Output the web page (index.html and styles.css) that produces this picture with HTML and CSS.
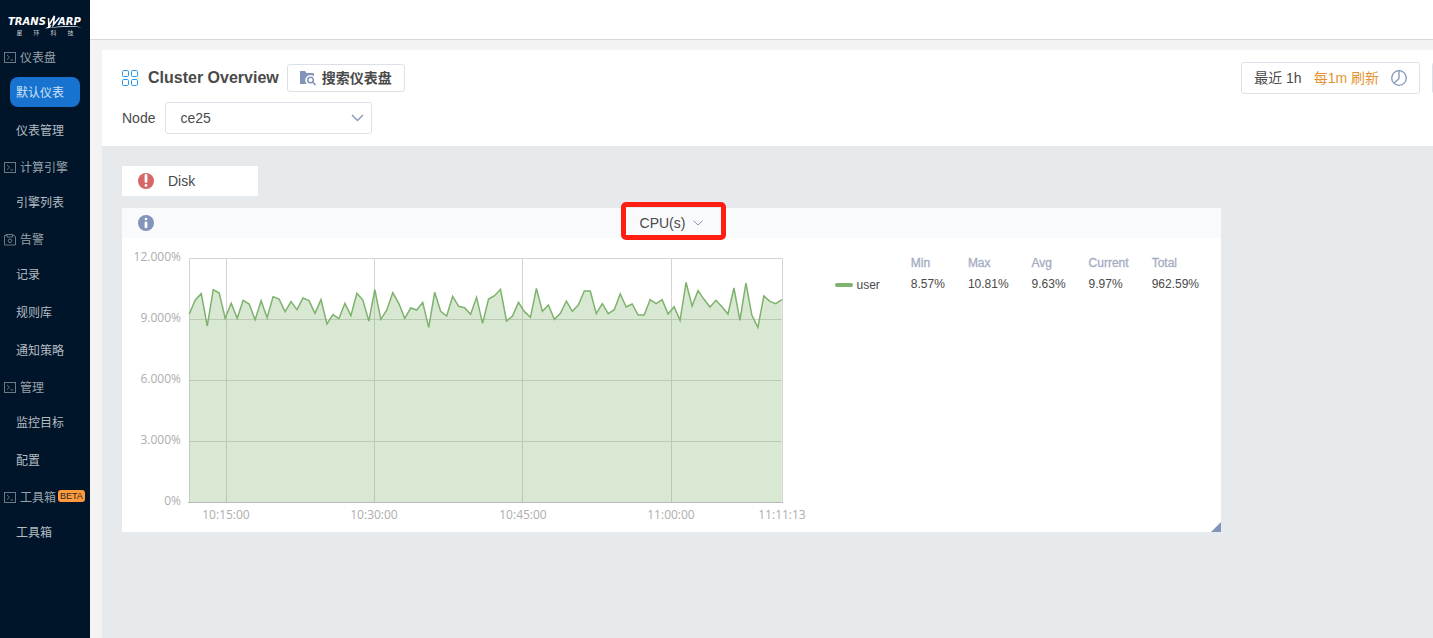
FILE: index.html
```html
<!DOCTYPE html>
<html lang="zh-CN">
<head>
<meta charset="utf-8">
<title>Cluster Overview</title>
<meta name="viewport" content="width=device-width, initial-scale=1">
<link rel="stylesheet" href="styles.css">
</head>
<body>
<svg class="defs" aria-hidden="true">
  <symbol id="terminal" viewBox="0 0 12 12">
    <rect x="0.5" y="0.5" width="11" height="10" fill="none" stroke="currentColor"/>
    <path d="M3 3l2.5 2.3L3 7.6M6.4 7.9h2.8" fill="none" stroke="currentColor" stroke-width=".9"/>
  </symbol>
</svg>
<div class="app">
  <aside class="sidebar">
    <svg class="logo" viewBox="0 0 90 43" role="img" aria-label="Transwarp">
      <text class="logo-name" x="8" y="25">TRANS</text>
      <text class="logo-name" x="58" y="25">ARP</text>
      <path d="M48.500 18l.3 7.500L54.500 16l-1.200 9L59.500 17.500" fill="none" stroke="#fff" stroke-width="1.500"/>
      <path d="M45 28.500q3-1.500 5-3.500l1.500.500q-1 1.500-2 2.200Q66 24.500 82 27.300 64 26 45 28.500z" fill="#fff"/>
      <text class="logo-sub" y="34.500" x="16.500 33.500 50.500 67.500">星环科技</text>
    </svg>
    <nav class="nav">
      <section class="group">
        <h2 class="group-title"><svg class="group-icon"><use href="#terminal"/></svg>仪表盘</h2>
        <a class="item active" href="#">默认仪表</a>
        <a class="item" href="#">仪表管理</a>
      </section>
      <section class="group">
        <h2 class="group-title"><svg class="group-icon"><use href="#terminal"/></svg>计算引擎</h2>
        <a class="item" href="#">引擎列表</a>
      </section>
      <section class="group">
        <h2 class="group-title"><svg class="group-icon" viewBox="0 0 12 12"><path d="M.5 1.500h1.500v-1h6.500l3 2v8.500H.5zM3 .8v2.200h5.500V.8" fill="none" stroke="currentColor"/><circle cx="6" cy="6.800" r="1.800" fill="none" stroke="currentColor"/></svg>告警</h2>
        <a class="item" href="#">记录</a>
        <a class="item" href="#">规则库</a>
        <a class="item" href="#">通知策略</a>
      </section>
      <section class="group">
        <h2 class="group-title"><svg class="group-icon"><use href="#terminal"/></svg>管理</h2>
        <a class="item" href="#">监控目标</a>
        <a class="item" href="#">配置</a>
      </section>
      <section class="group">
        <h2 class="group-title"><svg class="group-icon"><use href="#terminal"/></svg>工具箱<span class="beta">BETA</span></h2>
        <a class="item" href="#">工具箱</a>
      </section>
    </nav>
  </aside>
  <div class="main">
    <header class="topbar"></header>
    <main class="page">
      <div class="toolbar">
        <div class="toolbar-row">
          <svg class="grid-icon" viewBox="0 0 16 16" fill="none" stroke="#2a96ea"><rect x=".5" y=".5" width="6" height="6" rx="1.200"/><rect x="9.500" y=".5" width="6" height="6" rx="1.200"/><rect x=".5" y="9.500" width="6" height="6" rx="1.200"/><rect x="9.500" y="9.500" width="6" height="6" rx="1.200"/></svg>
          <h1 class="title">Cluster Overview</h1>
          <button class="btn search" type="button">
            <svg class="search-icon" viewBox="0 0 16 16"><path d="M0 1.500Q0 1 .5 1H5l1.500 2H13q1 0 1 1v2.500A5 5 0 0 0 6.800 14H.5Q0 14 0 13.500z" fill="#8295b9"/><circle cx="10.500" cy="10" r="2.800" fill="none" stroke="#8295b9" stroke-width="1.500"/><path d="M12.500 12l3 3" stroke="#8295b9" stroke-width="1.600"/></svg>
            搜索仪表盘
          </button>
          <div class="time-controls">
            <button class="btn time" type="button">
              <span>最近 1h</span><span class="refresh">每1m 刷新</span>
              <svg class="clock-icon" viewBox="0 0 16 16" fill="none" stroke="#8295b9" stroke-width="1.300"><circle cx="8" cy="8" r="7.300"/><path d="M8 .7v7.800L3 13.200"/></svg>
            </button>
            <button class="btn more" type="button" aria-label="More"></button>
          </div>
        </div>
        <div class="variable-row">
          <label for="node">Node</label>
          <span class="select-wrap">
            <select id="node" class="select"><option>ce25</option></select>
            <svg class="select-arrow" viewBox="0 0 12 8"><path d="M.5 1L6 6.500 11.500 1" fill="none" stroke="#8295b9" stroke-width="1.400"/></svg>
          </span>
        </div>
      </div>
      <div class="dashboard">
        <button class="disk" type="button">
          <svg class="status-icon" viewBox="0 0 16 16"><circle cx="8" cy="8" r="8" fill="#d66767"/><path d="M8 2.500v6" stroke="#fff" stroke-width="2.800" stroke-linecap="round"/><circle cx="8" cy="12.400" r="1.400" fill="#fff"/></svg>
          Disk
        </button>
        <section class="panel">
          <header class="panel-header">
            <svg class="status-icon" viewBox="0 0 16 16"><circle cx="8" cy="8" r="8" fill="#8295b9"/><circle cx="8" cy="4" r="1.300" fill="#fff"/><path d="M8 7.900v4" stroke="#fff" stroke-width="2.800" stroke-linecap="round"/></svg>
            <button class="panel-title" type="button">CPU(s)
              <svg class="title-arrow" viewBox="0 0 10 6"><path d="M.5.700L5 5 9.500.700" fill="none" stroke="#8295b9"/></svg>
            </button>
            <span></span>
            <span class="highlight"></span>
          </header>
          <div class="panel-body">
            <svg class="chart" viewBox="0 0 696 294" role="img" aria-label="CPU user usage">
              <g class="grid-lines">
                <path d="M67.500 20.500H660.500V264.500M67.500 20.500V264.500M67.500 81.500H660.500M67.500 142.500H660.500M67.500 203.500H660.500M104.500 20.500V264.500M252.500 20.500V264.500M400.500 20.500V264.500M549.500 20.500V264.500"/>
                <path class="baseline" d="M66 264.500H661"/>
              </g>
              <g transform="translate(67.300 12) scale(5.985 .33333)">
                <path class="area" d="M0 756L0 192 1 150 2 131 3 228 4 119 5 129 6 205 7 160 8 205 9 151 10 162 11 209 12 152 13 203 14 140 15 147 16 185 17 155 18 179 19 144 20 152 21 190 22 149 23 222 24 194 25 206 26 160 27 197 28 130 29 150 30 213 31 119 32 208 33 180 34 128 35 160 36 205 37 174 38 180 39 157 40 232 41 127 42 184 43 198 44 139 45 169 46 173 47 193 48 142 49 220 50 147 51 137 52 118 53 213 54 198 55 157 56 185 57 202 58 115 59 184 60 165 61 208 62 190 63 153 64 184 65 165 66 123 67 123 68 191 69 161 70 191 71 179 72 132 73 171 74 162 75 195 76 195 77 149 78 161 79 149 80 192 81 170 82 211 83 97 84 168 85 122 86 148 87 171 88 151 89 170 90 192 91 114 92 211 93 99 94 196 95 232 96 138 97 154 98 161 99 149V756z"/>
                <polyline class="line" points="0 192 1 150 2 131 3 228 4 119 5 129 6 205 7 160 8 205 9 151 10 162 11 209 12 152 13 203 14 140 15 147 16 185 17 155 18 179 19 144 20 152 21 190 22 149 23 222 24 194 25 206 26 160 27 197 28 130 29 150 30 213 31 119 32 208 33 180 34 128 35 160 36 205 37 174 38 180 39 157 40 232 41 127 42 184 43 198 44 139 45 169 46 173 47 193 48 142 49 220 50 147 51 137 52 118 53 213 54 198 55 157 56 185 57 202 58 115 59 184 60 165 61 208 62 190 63 153 64 184 65 165 66 123 67 123 68 191 69 161 70 191 71 179 72 132 73 171 74 162 75 195 76 195 77 149 78 161 79 149 80 192 81 170 82 211 83 97 84 168 85 122 86 148 87 171 88 151 89 170 90 192 91 114 92 211 93 99 94 196 95 232 96 138 97 154 98 161 99 149"/>
              </g>
              <g class="axis y-axis">
                <text x="59" y="23">12.000%</text><text x="59" y="84">9.000%</text><text x="59" y="145">6.000%</text><text x="59" y="206">3.000%</text><text x="59" y="267">0%</text>
              </g>
              <g class="axis x-axis">
                <text x="104" y="281">10:15:00</text><text x="252" y="281">10:30:00</text><text x="401" y="281">10:45:00</text><text x="549" y="281">11:00:00</text><text x="660" y="281">11:11:13</text>
              </g>
            </svg>
            <table class="legend">
              <thead><tr><td></td><th>Min</th><th>Max</th><th>Avg</th><th>Current</th><th>Total</th></tr></thead>
              <tbody><tr><td class="series"><span class="series-line"></span>user</td><td>8.57%</td><td>10.81%</td><td>9.63%</td><td>9.97%</td><td>962.59%</td></tr></tbody>
            </table>
          </div>
          <span class="resize"></span>
        </section>
      </div>
    </main>
  </div>
</div>
</body>
</html>
```
FILE: styles.css
```css
* { box-sizing: border-box; }

body {
  margin: 0;
  background: #f3f3f3;
  color: #4a4a4a;
  font: 14px/20px "Liberation Sans", "Noto Sans CJK SC", sans-serif;
}

button, select { font: inherit; color: inherit; }
svg { display: block; flex: none; }
.defs { display: none; }

.app { display: flex; min-height: 100vh; overflow: hidden; }

.sidebar { flex: none; width: 90px; background: #001529; }
.logo { width: 90px; height: 43px; }
.logo-name { fill: #fff; font: italic bold 10px "DejaVu Sans", sans-serif; }
.logo-sub { fill: #c8cdd2; font: 6px "Noto Sans CJK SC", sans-serif; }

.group-title {
  display: flex;
  align-items: center;
  height: 28px;
  margin: 0 0 6px;
  padding: 2px 0 0 4px;
  color: #98a1a9;
  font-size: 12px;
  font-weight: 400;
  white-space: nowrap;
}
.group-icon { width: 12px; height: 12px; margin-right: 4px; color: #6d7984; }
.beta {
  margin: -4px 0 0 2px;
  padding: 0 2px;
  border-radius: 3px;
  background: #ff9a3c;
  color: #2b2b2b;
  font-size: 9px;
  line-height: 12px;
}
.item {
  display: flex;
  align-items: center;
  height: 30px;
  margin: 0 10px 8px;
  padding: 2px 0 0 6px;
  border-radius: 8px;
  color: #b4bbc1;
  font-size: 12px;
  text-decoration: none;
  white-space: nowrap;
}
.item.active { background: #1872d0; color: #cfe2f6; }

.main { display: flex; flex-direction: column; flex: 1; min-width: 0; }
.topbar { height: 40px; background: #fff; border-bottom: 1px solid #d9d9d9; }
.page { display: flex; flex-direction: column; flex: 1; margin: 10px 0 0 12px; }

.toolbar { padding: 12px 0 12px 20px; background: #fff; }
.toolbar-row { display: flex; align-items: center; height: 32px; }
.grid-icon { width: 16px; height: 16px; margin-right: 10px; }
.title { margin: 0 8px 0 0; font-size: 16px; line-height: 20px; }
.btn {
  display: flex;
  align-items: center;
  border: 1px solid #dce1e9;
  border-radius: 3px;
  background: #fff;
  white-space: nowrap;
}
.search { gap: 6px; height: 28px; padding: 0 12px; font-weight: 700; }
.search-icon, .clock-icon { width: 16px; height: 16px; }
.time-controls { display: flex; gap: 12px; margin-left: auto; margin-right: -31px; }
.time { gap: 12px; height: 32px; padding: 0 12px; }
.refresh { color: #e59435; }
.more { width: 32px; height: 32px; }

.variable-row { display: flex; align-items: center; gap: 10px; margin-top: 8px; }
.select-wrap { position: relative; width: 207px; }
.select {
  display: block;
  width: 100%;
  height: 32px;
  padding: 0 14px;
  border: 1px solid #dce1e9;
  border-radius: 3px;
  background: #fff;
  appearance: none;
}
.select-arrow {
  position: absolute;
  top: 12px;
  right: 8px;
  width: 13px;
  height: 8px;
  pointer-events: none;
}

.dashboard { flex: 1; padding: 20px 212px 20px 20px; background: #e6eaed; }
.disk {
  display: flex;
  align-items: center;
  gap: 14px;
  width: 136px;
  height: 30px;
  padding: 0 16px;
  border: 0;
  background: #fff;
}
.status-icon { width: 16px; height: 16px; }

.panel { position: relative; margin-top: 12px; background: #fff; }
.panel-header {
  position: relative;
  display: grid;
  grid-template-columns: 1fr auto 1fr;
  align-items: center;
  height: 30px;
  padding: 0 16px;
  background: #f9fafc;
}
.panel-title {
  display: flex;
  align-items: center;
  gap: 8px;
  padding: 0;
  border: 0;
  background: none;
}
.title-arrow { width: 10px; height: 6px; }
.highlight {
  position: absolute;
  top: -6px;
  left: 50%;
  width: 105px;
  height: 38px;
  margin-left: -51px;
  border: 5px solid #ff1e12;
  border-radius: 5px;
  pointer-events: none;
}
.panel-body { display: flex; align-items: flex-start; justify-content: space-between; padding-right: 10px; }
.chart { flex: 0 1 696px; min-width: 0; }
.grid-lines { fill: none; stroke: #d4d4d4; }
.baseline { stroke: #b9b9b9; }
.area { fill: #7eb26d; fill-opacity: .3; }
.line { fill: none; stroke: #7eb26d; stroke-width: 1.5px; vector-effect: non-scaling-stroke; }
.axis { fill: #adadad; font: 12px "Open Sans", sans-serif; }
.y-axis { text-anchor: end; }
.x-axis { text-anchor: middle; }

.legend { margin-top: 15px; border-collapse: collapse; font-size: 12px; line-height: 20px; }
.legend th, .legend td { padding: 0 12px 0 11px; text-align: left; }
.legend th { color: #a4acc0; font-weight: 400; -webkit-text-stroke: 0.3px #a4acc0; }
.legend .series { display: flex; align-items: center; gap: 4px; padding: 2px 20px 0 0; }
.series-line { width: 18px; height: 4px; border-radius: 2px; background: #7eb26d; }

.resize {
  position: absolute;
  right: 0;
  bottom: 0;
  border-left: 10px solid transparent;
  border-bottom: 10px solid #8295b9;
}
```
